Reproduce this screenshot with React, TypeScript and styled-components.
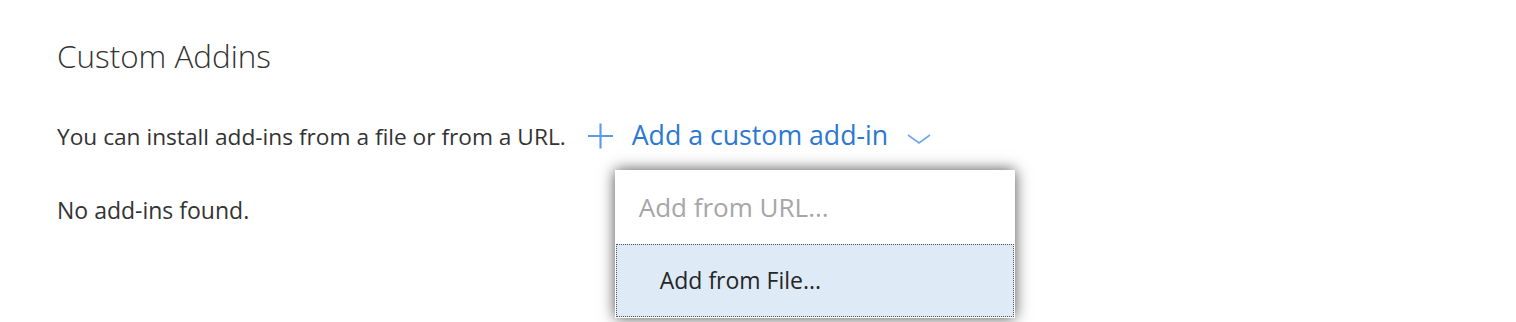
import React, { FC } from "react";
import styled, { createGlobalStyle } from "styled-components";

const GlobalStyle = createGlobalStyle`
  html, body {
    margin: 0;
    padding: 0;
    background: #ffffff;
  }
  body {
    font-family: "Open Sans", "Liberation Sans", sans-serif;
    color: #333333;
  }
`;

const App: FC = () => {
  return (
    <Container>
      <GlobalStyle />
      <Title>Custom Addins</Title>

      <InstallRow>
        <span>You can install add-ins from a file or from a URL.</span>
        <AddButton>
          <PlusIcon viewBox="0 0 26 26">
            <path d="M13 0v26M0 13h26" />
          </PlusIcon>
          <LinkText>Add a custom add-in</LinkText>
          <Chevron viewBox="0 0 24 10">
            <path d="M1 1l11 8 11-8" />
          </Chevron>

          <Menu>
            <MenuItem disabled>Add from URL...</MenuItem>
            <MenuItem focused>Add from File...</MenuItem>
          </Menu>
        </AddButton>
      </InstallRow>

      <Empty>No add-ins found.</Empty>
    </Container>
  );
};

const Container = styled.div`
  display: flex;
  flex-direction: column;
  padding: 36px 0 0 57px;
  height: 322px;
  box-sizing: border-box;
  overflow: hidden;
`;

const Title = styled.h1`
  margin: 0;
  font-size: 31.4px;
  font-weight: 300;
  line-height: 40px;
  color: #333333;
`;

const InstallRow = styled.div`
  display: flex;
  align-items: center;
  margin-top: 40px;
  height: 40px;
  font-size: 22.7px;
`;

const AddButton = styled.div`
  position: relative;
  align-self: stretch;
  display: flex;
  align-items: center;
  margin-left: 22px;
  cursor: pointer;
`;

const PlusIcon = styled.svg`
  width: 25px;
  height: 26px;
  stroke: #5b9be2;
  stroke-width: 2.2;
  fill: none;
`;

const LinkText = styled.span`
  margin-left: 19px;
  padding-bottom: 4px;
  font-size: 26.7px;
  color: #2b78d4;
`;

const Chevron = styled.svg`
  width: 24px;
  height: 10px;
  margin-left: 19px;
  margin-top: 6px;
  stroke: #6fa8e8;
  stroke-width: 1.6;
  fill: none;
`;

const Menu = styled.div`
  position: absolute;
  top: 54px;
  left: 27px;
  width: 400px;
  height: 148px;
  background: #ffffff;
  box-shadow: 0 0 14px rgba(0, 0, 0, 0.7);
  display: flex;
  flex-direction: column;
  padding: 0 1px 1px 1px;
  box-sizing: border-box;
`;

const MenuItem = styled.div<{ disabled?: boolean; focused?: boolean }>`
  flex: 1;
  display: flex;
  align-items: center;
  box-sizing: border-box;
  font-size: ${(p) => (p.focused ? "23px" : "26px")};
  padding-left: ${(p) => (p.focused ? "43px" : "22px")};
  color: ${(p) => (p.disabled ? "#a6a6a6" : "#262626")};
  background: ${(p) => (p.focused ? "#deeaf6" : "transparent")};
  border: 1px dotted ${(p) => (p.focused ? "#555555" : "transparent")};
`;

const Empty = styled.div`
  margin-top: 34px;
  font-size: 23px;
  line-height: 40px;
`;

export default App;
